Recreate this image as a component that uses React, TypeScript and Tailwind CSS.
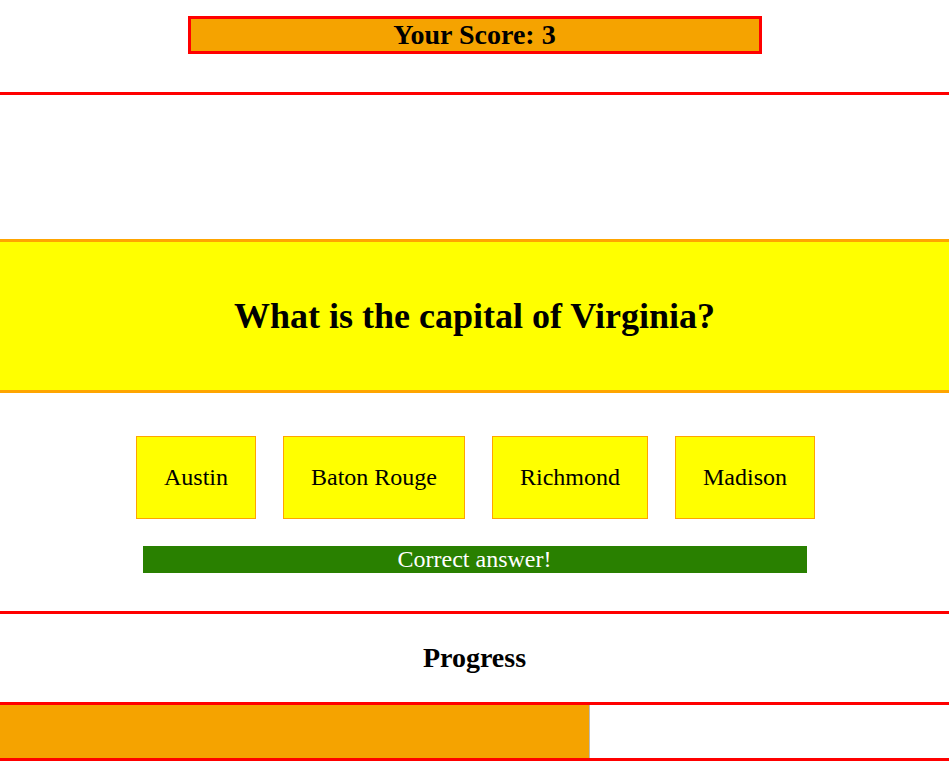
import React from "react";

const answers = ["Austin", "Baton Rouge", "Richmond", "Madison"];

export default function App() {
  return (
    <div className="min-h-screen bg-white text-black font-['Liberation_Serif',serif]">
      <header className="pt-4 pb-[38px] border-b-[3px] border-[#f00]">
        <div className="mx-auto w-[574px] border-[3px] border-[#f00] bg-[#f5a300] text-center text-[28px] font-bold leading-[32px]">
          Your Score: 3
        </div>
      </header>

      <section className="mt-[144px] h-[154px] flex items-center justify-center border-y-[3px] border-[#ffa500] bg-[#ffff00]">
        <h1 className="text-[36px] font-bold leading-none">
          What is the capital of Virginia?
        </h1>
      </section>

      <div className="mt-[43px] flex justify-center gap-[27px] pl-[2px]">
        {answers.map((a) => (
          <button
            key={a}
            className="border border-[#ffa500] bg-[#ffff00] px-[27px] py-[27px] text-[24px] leading-[27px]"
          >
            {a}
          </button>
        ))}
      </div>

      <div className="mx-auto mt-[27px] w-[664px] h-[27px] bg-[#298000] text-center text-white text-[24px] leading-[27px]">
        Correct answer!
      </div>

      <div className="mt-[38px] h-[91px] flex items-center justify-center border-t-[3px] border-[#f00]">
        <h2 className="text-[28px] font-bold">Progress</h2>
      </div>

      <div className="h-[59px] border-y-[3px] border-[#f00]">
        <div className="h-full w-[590px] bg-[#f5a300] border-r border-[#bbb]"></div>
      </div>
    </div>
  );
}
